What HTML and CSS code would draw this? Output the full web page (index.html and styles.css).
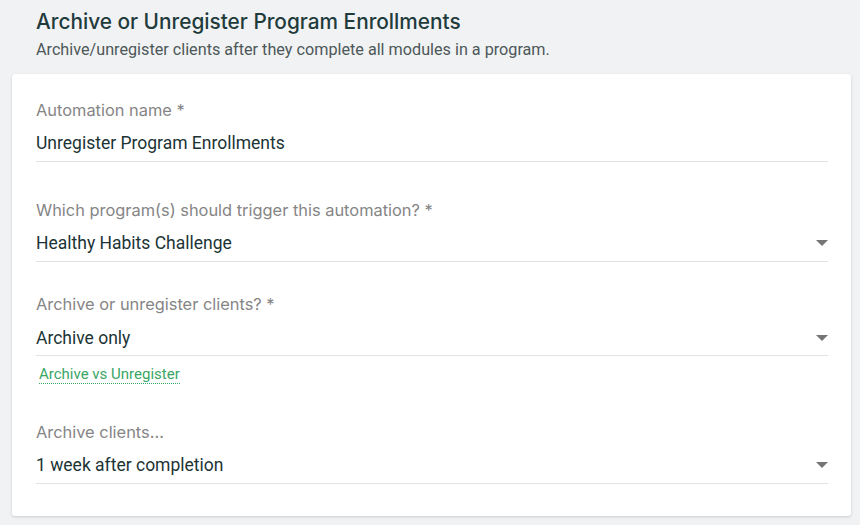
FILE: index.html
```html
<!DOCTYPE html>
<html>
<head>
<meta charset="utf-8">
<link rel="stylesheet" href="styles.css">
</head>
<body>
<div class="page">
  <header class="head">
    <h1 class="title">Archive or Unregister Program Enrollments</h1>
    <p class="subtitle">Archive/unregister clients after they complete all modules in a program.</p>
  </header>
  <section class="card">
    <div class="field f1">
      <div class="label">Automation name *</div>
      <div class="value">Unregister Program Enrollments</div>
    </div>
    <div class="field f2">
      <div class="label">Which program(s) should trigger this automation? *</div>
      <div class="value select"><span>Healthy Habits Challenge</span><span class="caret"></span></div>
    </div>
    <div class="field f3">
      <div class="label">Archive or unregister clients? *</div>
      <div class="value select v3"><span>Archive only</span><span class="caret"></span></div>
    </div>
    <a class="help">Archive vs Unregister</a>
    <div class="field f4">
      <div class="label">Archive clients...</div>
      <div class="value select"><span>1 week after completion</span><span class="caret"></span></div>
    </div>
  </section>
</div>
</body>
</html>
```
FILE: styles.css
```css
html, body {
  margin: 0;
  padding: 0;
  background: #f1f2f4;
}
.page {
  width: 860px;
  height: 525px;
  overflow: hidden;
  font-family: Roboto, "Liberation Sans", sans-serif;
}
.head {
  padding: 9px 0 0 36px;
}
.title {
  margin: 0;
  font-family: Inter, "Open Sans", sans-serif;
  font-weight: 500;
  font-size: 20.8px;
  line-height: 26px;
  color: #1f3b3c;
}
.subtitle {
  margin: 4px 0 0;
  font-size: 16.2px;
  line-height: 22px;
  color: #4d5859;
}
.card {
  margin: 13px 9px 0 12px;
  background: #fff;
  border-radius: 3px;
  box-shadow: 0 1px 3px rgba(0,0,0,0.16);
  padding: 25px 23px 32px 24px;
  display: flex;
  flex-direction: column;
}
.label {
  font-family: Inter, "Open Sans", sans-serif;
  font-size: 16.4px;
  line-height: 22px;
  color: #858585;
}
.value {
  margin-top: 10px;
  font-size: 17.5px;
  line-height: 24px;
  color: #1c3435;
  padding-bottom: 6px;
  border-bottom: 1px solid #e1e2e3;
}
.select {
  display: flex;
  align-items: center;
  justify-content: space-between;
}
.v3 { margin-top: 11px; padding-bottom: 5px; }
.caret {
  width: 0;
  height: 0;
  border-left: 6px solid transparent;
  border-right: 6px solid transparent;
  border-top: 6px solid #757575;
}
.f1 { margin-bottom: 37px; }
.f2 { margin-bottom: 31px; }
.help {
  align-self: flex-start;
  margin: 9px 0 37px 3px;
  font-size: 15px;
  line-height: 18px;
  color: #3aa665;
  border-bottom: 1px dotted #3aa665;
}
```
